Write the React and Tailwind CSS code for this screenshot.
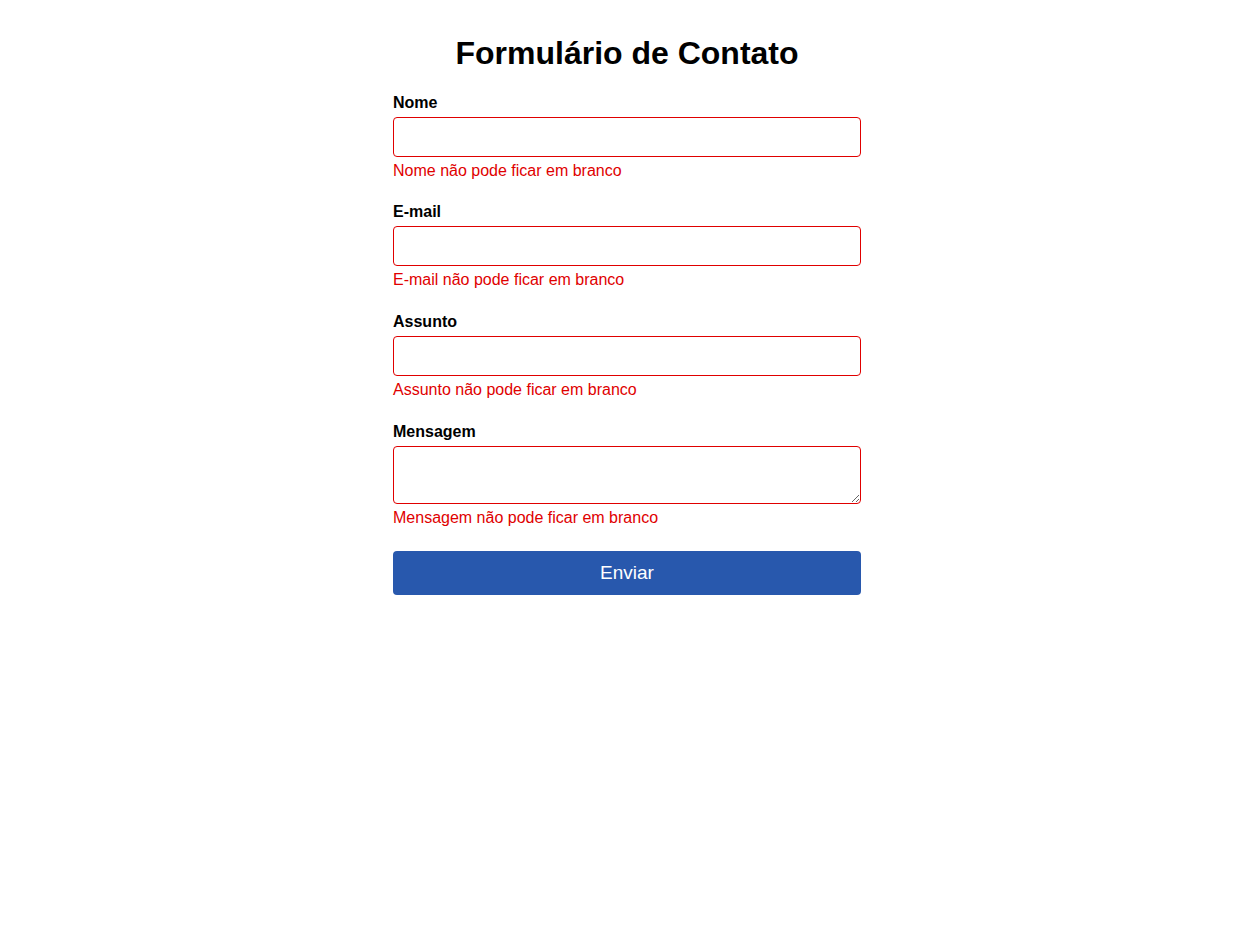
import React from "react";

const fields = [
  { label: "Nome", error: "Nome não pode ficar em branco", mb: "mb-[22px]" },
  { label: "E-mail", error: "E-mail não pode ficar em branco", mb: "mb-[23px]" },
  { label: "Assunto", error: "Assunto não pode ficar em branco", mb: "mb-[23px]" },
];

export default function App() {
  return (
    <div className="min-h-[932px] bg-white text-black" style={{ fontFamily: '"Liberation Sans", Arial, sans-serif' }}>
      <div className="ml-[393px] w-[468px] pt-[35px]">
        <h1 className="text-center text-[32px] font-bold leading-[37px] mb-[21px]">Formulário de Contato</h1>
        <form onSubmit={(e) => e.preventDefault()} className="flex flex-col">
          {fields.map((f) => (
            <div key={f.label} className={`flex flex-col ${f.mb}`}>
              <label className="text-[16px] font-bold leading-[20px] mb-[4px]">{f.label}</label>
              <input type="text" className="h-[40px] w-full rounded-[4px] border border-[#e00000] outline-none px-2" />
              <span className="mt-[5px] text-[16px] leading-[18px] text-[#e00000]">{f.error}</span>
            </div>
          ))}
          <div className="flex flex-col mb-[24px]">
            <label className="text-[16px] font-bold leading-[20px] mb-[4px]">Mensagem</label>
            <textarea className="h-[58px] w-full rounded-[4px] border border-[#e00000] outline-none px-2 block" />
            <span className="mt-[5px] text-[16px] leading-[18px] text-[#e00000]">Mensagem não pode ficar em branco</span>
          </div>
          <button type="submit" className="h-[44px] w-full rounded-[4px] bg-[#2858ad] text-white text-[19px]">Enviar</button>
        </form>
      </div>
    </div>
  );
}
